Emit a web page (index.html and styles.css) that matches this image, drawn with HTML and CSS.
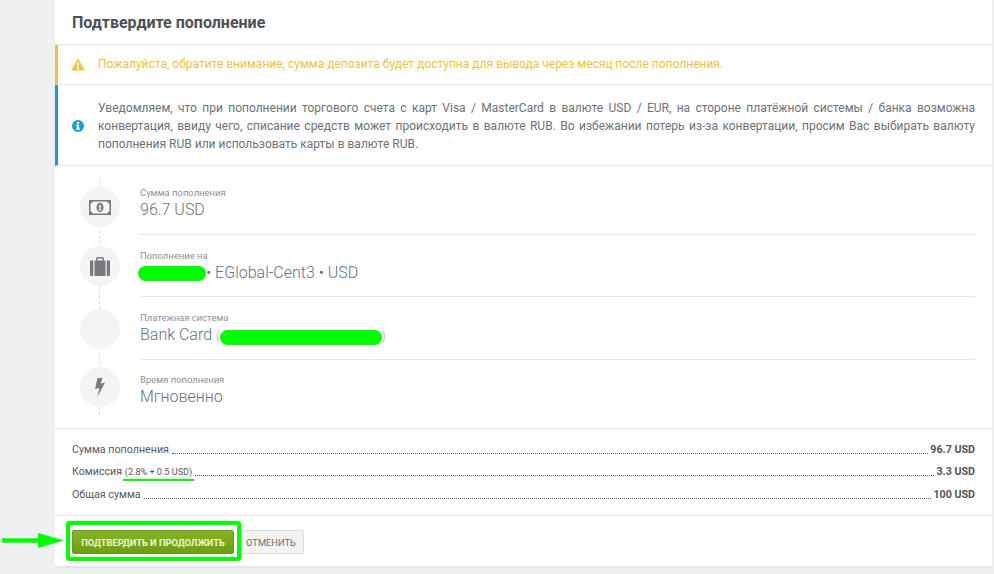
FILE: index.html
```html
<!DOCTYPE html>
<html lang="ru">
<head>
<meta charset="utf-8">
<title>Подтвердите пополнение</title>
<link rel="stylesheet" href="styles.css">
</head>
<body>
<main class="card">
  <h1 class="title">Подтвердите пополнение</h1>
  <div class="alert alert-warn">
    <svg class="alert-icon" viewBox="0 0 14 13" width="14" height="13"><path fill="#f0c33c" fill-rule="evenodd" d="M7 0.3 13.800 12.600H0.200ZM6 4.300 6.200 8.800H7.800L8 4.300ZM6.100 9.600V11.200H7.900V9.600Z"/></svg>
    <p class="alert-text">Пожалуйста, обратите внимание, сумма депозита будет доступна для вывода через месяц после пополнения.</p>
  </div>
  <div class="alert alert-info">
    <svg class="alert-icon" viewBox="0 0 12 12" width="12" height="12"><path fill="#1b9fce" fill-rule="evenodd" d="M6 0a6 6 0 1 1 0 12A6 6 0 0 1 6 0ZM4.900 1.900V3.700H7.100V1.900ZM4.100 4.800V5.900H4.900V8.500H4.100V9.800H7.900V8.500H7.100V4.800Z"/></svg>
    <p class="alert-text justify">Уведомляем, что при пополнении торгового счета с карт Visa / MasterCard в валюте USD / EUR, на стороне платёжной системы / банка возможна конвертация, ввиду чего, списание средств может происходить в валюте RUB. Во избежании потерь из-за конвертации, просим Вас выбирать валюту пополнения RUB или использовать карты в валюте RUB.</p>
  </div>

  <section class="details">
    <div class="row row-1">
      <div class="circle">
        <svg viewBox="0 0 22 15" width="22" height="15"><path fill="#777b80" fill-rule="evenodd" d="M0 0H22V15H0ZM4 1.500 1.500 4V11L4 13.500H18L20.500 11V4L18 1.500ZM11 2.800C13 2.800 14.500 4.900 14.500 7.500S13 12.200 11 12.200 7.500 10.100 7.500 7.500 9 2.800 11 2.800ZM11.200 4.700 9.600 6V7H10.500V9.600H9.600V10.500H12.500V9.600H11.800V4.700Z"/></svg>
      </div>
      <div class="info">
        <div class="label">Сумма пополнения</div>
        <div class="value">96.7 USD</div>
      </div>
    </div>
    <div class="row row-2">
      <div class="circle">
        <svg viewBox="0 0 20 19" width="20" height="19"><path fill="#777b80" fill-rule="evenodd" d="M7.500 0H12.500Q14 0 14 1.500V3.500H20V17.500Q20 19 18.500 19H1.500Q0 19 0 17.500V3.500H6V1.500Q6 0 7.500 0ZM7.500 1.500V3.500H12.500V1.500ZM3.300 3.500V19H4.500V3.500ZM15.500 3.500V19H16.700V3.500Z"/></svg>
      </div>
      <div class="info">
        <div class="label">Пополнение на</div>
        <div class="value"><span class="mask mask-account"></span>• EGlobal-Cent3 • USD</div>
      </div>
    </div>
    <div class="row row-3">
      <div class="circle"></div>
      <div class="info">
        <div class="label">Платежная система</div>
        <div class="value">Bank Card <small class="paren">(<span class="mask mask-card"></span>)</small></div>
      </div>
    </div>
    <div class="row row-4">
      <div class="circle">
        <svg viewBox="0 0 10 19" width="10" height="19"><path fill="#777b80" d="M2.500 0H7.500L5.500 5.500 10 4.500 2.500 19 4.500 10 0 11Z"/></svg>
      </div>
      <div class="info">
        <div class="label">Время пополнения</div>
        <div class="value">Мгновенно</div>
      </div>
    </div>
  </section>

  <section class="summary">
    <div class="sum-row"><span>Сумма пополнения</span><i class="dots"></i><b>96.7 USD</b></div>
    <div class="sum-row"><span>Комиссия <small class="fee">(2.8% + 0.5 USD)</small></span><i class="dots"></i><b>3.3 USD</b></div>
    <div class="sum-row"><span>Общая сумма</span><i class="dots"></i><b>100 USD</b></div>
  </section>

  <footer class="actions">
    <span class="highlight"><button class="btn btn-primary" type="button">ПОДТВЕРДИТЬ И ПРОДОЛЖИТЬ</button></span>
    <button class="btn btn-default" type="button">ОТМЕНИТЬ</button>
    <svg class="arrow" viewBox="0 0 62 15" width="62" height="15"><path fill="#00ff00" d="M0 5.300H36V0L62 7.500 36 15V9.700H0Z"/></svg>
  </footer>
</main>
</body>
</html>
```
FILE: styles.css
```css
* { box-sizing: border-box; }
html, body { height: 100%; }
body {
  margin: 0;
  padding: 0 2px 0 55px;
  background: #eff0f2;
  font-family: Roboto, "Liberation Sans", sans-serif;
  color: #555a60;
  overflow: hidden;
}
.card {
  background: #fff;
  height: 568px;
  border-bottom: 2px solid #e4e5e8;
  position: relative;
}
.title {
  margin: 0;
  height: 45px;
  padding: 14px 0 0 17px;
  font-size: 16px;
  line-height: 18px;
  font-weight: 700;
  color: #4c5157;
  border-bottom: 1px solid #e6e8eb;
}
.alert {
  display: flex;
  align-items: center;
  border-left: 3px solid;
  border-bottom: 1px solid #e6e8eb;
}
.alert-warn { height: 40px; border-left-color: #f0c33c; color: #f0c33c; }
.alert-info { height: 81px; padding-top: 2px; border-left-color: #1b9fce; color: #6d7279; }
.alert-icon { flex: none; margin-left: 13px; }
.alert-warn .alert-icon { margin-right: 13px; }
.alert-info .alert-icon { margin-left: 14px; margin-right: 14px; }
.alert-text { margin: 0; font-size: 12px; line-height: 18px; }
.alert-warn .alert-text { padding-bottom: 2px; }
.justify { text-align: justify; padding-right: 17px; flex: 1; }
.details {
  height: 263px;
  padding: 6px 17px 0 25px;
  border-bottom: 1px solid #e6e8eb;
  position: relative;
}
.details::before {
  content: "";
  position: absolute;
  left: 44px;
  top: 14px;
  height: 235px;
  border-left: 1px dashed #dcdde0;
}
.row { display: flex; height: 62.500px; }
.circle {
  flex: none;
  width: 40px;
  height: 40px;
  border-radius: 50%;
  background: #f4f4f5;
  display: flex;
  align-items: center;
  justify-content: center;
  position: relative;
}
.row-1 .circle { margin-top: 15px; }
.row-2 .circle { margin-top: 11.500px; }
.row-3 .circle { margin-top: 12px; }
.row-4 .circle { margin-top: 7.500px; }
.info {
  flex: 1;
  margin-left: 20px;
  padding-top: 15px;
  border-bottom: 1px solid #e3e6ea;
}
.row-4 .info { border-bottom: 0; padding-top: 14px; }
.label { font-size: 9.450px; line-height: 12px; color: #8e9196; }
.value { font-size: 16px; font-weight: 300; line-height: 20px; margin-top: 1px; color: #66717f; white-space: nowrap; }
.paren { font-size: 12px; color: #a9acb0; }
.mask { display: inline-block; background: #00ff00; border-radius: 8px; vertical-align: middle; }
.mask-account { width: 68px; height: 15px; margin: 0 0 0 -2px; }
.mask-card { width: 162px; height: 15px; margin: 1px 0 0 0; }
.summary {
  height: 87px;
  padding: 8px 17px 0;
  border-bottom: 1px solid #e6e8eb;
  font-size: 10.700px;
}
.sum-row {
  display: flex;
  align-items: flex-end;
  height: 22.500px;
  padding-bottom: 4px;
  color: #555a60;
}
.sum-row b { font-weight: 700; color: #50555b; }
.dots { flex: 1; border-bottom: 1px dotted #555a60; margin: 0 2px 2px 3px; }
.fee { font-size: 9.100px; position: relative; display: inline-block; }
.fee::after {
  content: "";
  position: absolute;
  left: -2px;
  right: -2px;
  bottom: -4px;
  height: 2px;
  background: #00ff00;
}
.actions {
  display: flex;
  align-items: flex-start;
  height: 50px;
  padding: 5px 0 0 11px;
  position: relative;
}
.highlight {
  display: inline-flex;
  padding: 5px 3px 3px 2px;
  border: 4px solid #00ff00;
  border-radius: 3px;
  background: #fff;
}
.btn {
  font-family: Roboto, "Liberation Sans", sans-serif;
  font-size: 9.300px;
  height: 24px;
  border-radius: 2px;
  padding: 0;
}
.btn-primary {
  width: 162px;
  font-weight: 700;
  color: #f4f6c8;
  background: linear-gradient(#84b524, #6c9e12);
  border: 1px solid #6a9a18;
}
.btn-default {
  width: 63px;
  margin: 9px 0 0 0;
  padding-right: 3px;
  color: #6b6f75;
  background: #f3f3f3;
  border: 1px solid #dcdcdc;
}
.arrow { position: absolute; left: -53px; top: 17px; width: 62px; height: 15px; }
```
